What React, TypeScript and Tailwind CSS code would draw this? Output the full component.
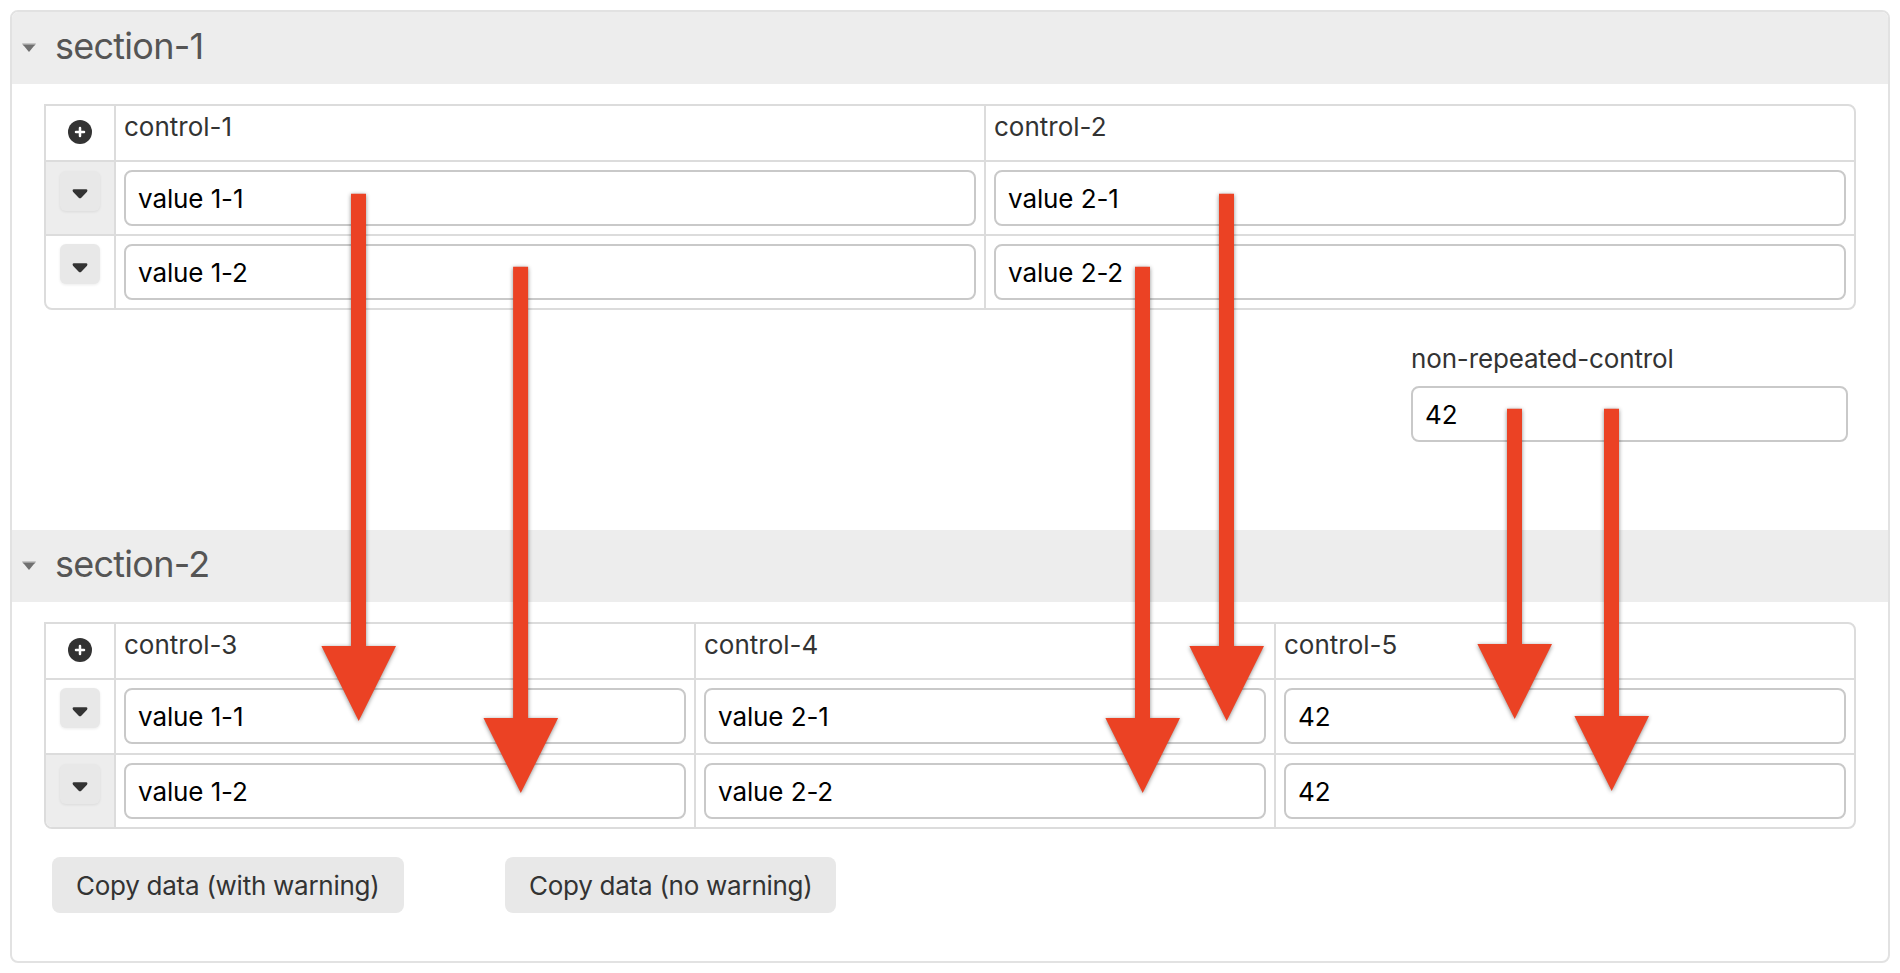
import React from "react";

function Caret({ className }: { className: string }) {
  return (
    <svg viewBox="0 0 16 10" className={className} fill="currentColor">
      <path d="M1.6 0.2H14.4Q15.6 0.4 15.4 1.8Q15.3 2.4 14.8 2.9L9.3 8.7Q8 9.9 6.7 8.7L1.2 2.9Q0.7 2.4 0.6 1.8Q0.4 0.4 1.6 0.2Z" />
    </svg>
  );
}

function SectionHeader({ title }: { title: string }) {
  return (
    <div className="flex h-[72px] shrink-0 items-center bg-[#ededed] pl-[10px]">
      <svg viewBox="0 0 14 10" className="h-[10px] w-[14px]">
        <path d="M0 0.5H14L12.8 2.6H1.2Z" fill="#a0a0a0" />
        <path d="M1.2 2H12.8L7 9Z" fill="#707070" />
      </svg>
      <h2 className="pb-1 pl-[19px] text-[36px] leading-[44px] tracking-[-0.75px] text-[#555]">{title}</h2>
    </div>
  );
}

function Field({ value }: { value: string }) {
  return (
    <div className="flex h-14 items-center rounded-lg border-2 border-[#c9c9c9] bg-white pl-3 pt-px text-[26px] leading-8 tracking-[-0.1px] text-black">
      {value}
    </div>
  );
}

type Row = { values: string[]; active?: boolean; tall?: boolean };

function Repeater({ columns, rows }: { columns: string[]; rows: Row[] }) {
  return (
    <div className="flex flex-col overflow-hidden rounded-r-lg rounded-bl-lg border-2 border-[#dcdcdc]">
      <div className="flex h-[54px]">
        <div className="flex w-[68px] shrink-0 justify-center pt-[14px]">
          <svg viewBox="0 0 24 24" className="size-6">
            <circle cx="12" cy="12" r="12" fill="#333" />
            <path d="M12 8V16M8 12H16" stroke="#fff" strokeWidth="2.5" strokeLinecap="round" />
          </svg>
        </div>
        {columns.map((c) => (
          <div key={c} className="flex-1 basis-0 border-l-2 border-[#dcdcdc] pl-2 pt-[5px] text-[26px] leading-8 text-[#333]">
            {c}
          </div>
        ))}
      </div>
      {rows.map((r, i) => (
        <div key={i} className={`flex border-t-2 border-[#dcdcdc] ${r.tall ? "h-[75px]" : "h-[74px]"}`}>
          <div className={`flex w-[68px] shrink-0 justify-center ${r.active ? "bg-[#ededed] pt-[9px]" : "pt-2"}`}>
            <div
              className={`flex size-10 justify-center rounded-md bg-[#e8e8e8] text-[#333] shadow-[0_1px_3px_rgba(0,0,0,0.08)] ${r.active ? "pt-[18px]" : "pt-[19px]"}`}
            >
              <Caret className="h-[10px] w-4" />
            </div>
          </div>
          {r.values.map((v, j) => (
            <div key={j} className="flex-1 basis-0 border-l-2 border-[#dcdcdc] p-2">
              <Field value={v} />
            </div>
          ))}
        </div>
      ))}
    </div>
  );
}

function Button({ className, children }: { className: string; children: string }) {
  return (
    <button
      className={`flex h-14 items-center whitespace-nowrap rounded-lg bg-[#e8e8e8] pl-6 pt-px text-[26px] leading-8 tracking-[-0.26px] text-[#333] ${className}`}
    >
      {children}
    </button>
  );
}

const arrows = [
  { x: 358.7, top: 193.7, head: 646 },
  { x: 520.8, top: 266.7, head: 718 },
  { x: 1226.7, top: 193.7, head: 646 },
  { x: 1142.7, top: 266.7, head: 718 },
  { x: 1514.7, top: 408.8, head: 644 },
  { x: 1611.7, top: 408.8, head: 716 },
];

export default function App() {
  return (
    <div className="relative h-[973px] w-[1900px] bg-white p-[10px] font-['Inter',sans-serif]">
      <div className="flex h-[953px] flex-col overflow-hidden rounded-lg border-2 border-[#e2e2e2]">
        <SectionHeader title="section-1" />
        <div className="flex h-[446px] shrink-0 flex-col pl-8 pr-8 pt-5">
          <Repeater
            columns={["control-1", "control-2"]}
            rows={[{ values: ["value 1-1", "value 2-1"], active: true }, { values: ["value 1-2", "value 2-2"] }]}
          />
          <div className="mr-2 mt-8 w-[437px] self-end">
            <div className="mb-[10px] text-[26px] leading-[34px] tracking-[-0.15px] text-[#333]">non-repeated-control</div>
            <Field value="42" />
          </div>
        </div>
        <SectionHeader title="section-2" />
        <div className="flex flex-col pl-8 pr-8 pt-5">
          <Repeater
            columns={["control-3", "control-4", "control-5"]}
            rows={[
              { values: ["value 1-1", "value 2-1", "42"], tall: true },
              { values: ["value 1-2", "value 2-2", "42"], active: true },
            ]}
          />
          <div className="mt-7 flex gap-[101px] pl-2">
            <Button className="w-[352px]">Copy data (with warning)</Button>
            <Button className="w-[331px]">Copy data (no warning)</Button>
          </div>
        </div>
      </div>
      <svg viewBox="0 0 1900 973" className="pointer-events-none absolute inset-0 h-[973px] w-[1900px] drop-shadow-[0_1px_2px_rgba(0,0,0,0.45)]">
        {arrows.map((a) => (
          <path
            key={a.x}
            fill="#eb4224"
            d={`M${a.x - 7.7} ${a.top}h15v${a.head - a.top}h30l-37.3 75l-37.3 -75h29.6Z`}
          />
        ))}
      </svg>
    </div>
  );
}
